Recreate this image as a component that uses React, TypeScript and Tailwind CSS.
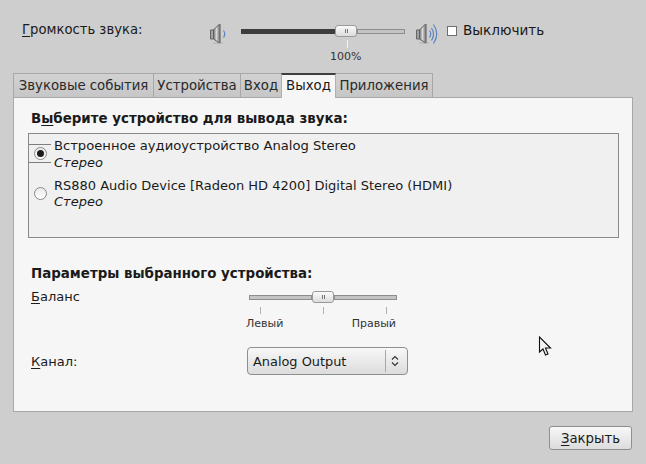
import React from 'react';

const tabs = [
  { label: 'Звуковые события', width: 'w-[141px]' },
  { label: 'Устройства', width: 'w-[88px]' },
  { label: 'Вход', width: 'w-[42px]' },
  { label: 'Выход', width: 'w-[55px]' },
  { label: 'Приложения', width: 'w-[98px]' },
];

const Speaker = ({ waves }: { waves: number }) => (
  <svg width="32" height="24" viewBox="0 0 32 24" className="block">
    <defs>
      <linearGradient id="cone" x1="0" y1="0" x2="1" y2="0">
        <stop offset="0" stopColor="#6f6f6f" />
        <stop offset="0.5" stopColor="#d8d8d8" />
        <stop offset="1" stopColor="#7a7a7a" />
      </linearGradient>
    </defs>
    <ellipse cx="9" cy="22" rx="5.5" ry="1" fill="#bcbcbc" />
    <path d="M1.5 9h3v9h-3z" fill="#a2a2a2" stroke="#666" strokeWidth="1" />
    <path d="M4.5 9l6-6v19l-6-4z" fill="url(#cone)" stroke="#5f5f5f" strokeWidth="1" />
    <path d="M10.5 3h1.5v19h-1.5z" fill="#8f8f8f" />
    <path d="M14.5 9.5q2.5 3.5 0 7" fill="none" stroke="#5a84c0" strokeWidth="1.2" />
    {waves > 1 && <path d="M16.5 7q4 6 0 12.5" fill="none" stroke="#5a84c0" strokeWidth="1.2" />}
    {waves > 1 && <path d="M18.5 3.5q6.5 9.5 0 19" fill="none" stroke="#5a84c0" strokeWidth="1.2" />}
  </svg>
);

const Thumb = () => (
  <div className="flex h-[12px] w-[22px] items-center justify-center gap-[1px] rounded-[3px] border border-[#9a9a9a] bg-gradient-to-b from-[#fbfbfb] to-[#dcdcdc]">
    <span className="h-[4px] w-[1px] bg-[#777]" />
    <span className="h-[4px] w-[1px] bg-[#777]" />
  </div>
);

const Radio = ({ checked }: { checked?: boolean }) => (
  <span className="flex h-[13px] w-[13px] items-center justify-center rounded-full border border-[#8a8a8a] bg-gradient-to-b from-[#e9e9e9] to-white">
    {checked && <span className="h-[7px] w-[7px] rounded-full bg-[#1c1c1c]" />}
  </span>
);

export default function App() {
  return (
    <div
      className="relative flex h-[464px] w-[646px] flex-col overflow-hidden bg-[#cecece] text-[13px] leading-[17px] text-[#1a1a1a]"
      style={{ fontFamily: '"DejaVu Sans", sans-serif' }}
    >
      {/* volume row */}
      <div className="flex h-[73px] shrink-0">
        <div className="ml-[22px] mt-[21px] w-[187px] whitespace-nowrap text-[13.2px]">
          <u className="underline-offset-2">Г</u>ромкость звука:
        </div>
        <div className="mt-[21px]"><Speaker waves={1} /></div>
        <div className="w-[164px] shrink-0">
          <div className="mt-[25px] flex h-[12px] items-center">
            <div className="h-[5px] w-[94px] bg-[#3d3d3d]" />
            <Thumb />
            <div className="h-[5px] flex-1 border border-[#8d8d8d] bg-[#c4c4c4]" />
          </div>
          <div className="ml-[106px] mt-[3px] h-[8px] w-[1px] bg-[#f2f2f2]" />
          <div className="ml-[89px] mt-[2px] text-[11px] leading-[14px] text-[#333]">100%</div>
        </div>
        <div className="ml-[10px] mt-[21px]"><Speaker waves={3} /></div>
        <div className="mt-[22px] flex items-center self-start">
          <span className="h-[10px] w-[10px] border border-[#6f6f6f] bg-white" />
          <span className="ml-[6px] text-[13.6px]">Выключить</span>
        </div>
      </div>

      {/* tabs */}
      <div className="ml-[13px] flex h-[24px] shrink-0 items-end text-[13.3px]">
        {tabs.map((t) =>
          t.label === 'Выход' ? (
            <div key={t.label} className={`${t.width} relative z-10 -mb-[1px] -ml-[1px] flex h-[25px] items-center justify-center border-t-2 border-x border-[#3f3f3f] border-x-[#b0b0b0] bg-[#f6f6f6] pb-[3px]`}>
              {t.label}
            </div>
          ) : (
            <div key={t.label} className={`${t.width} -ml-[1px] flex h-[24px] items-center justify-center border border-b-0 border-[#a8a8a8] bg-gradient-to-b from-[#d2d2d2] to-[#c6c6c6] text-[#2a2a2a] first:ml-0`}>
              {t.label}
            </div>
          ),
        )}
      </div>

      {/* panel */}
      <div className="mx-[13px] h-[315px] shrink-0 border border-[#a8a8a8] bg-[#f6f6f6] pl-[14px] pr-[14px]">
        <div className="ml-[3px] mt-[12px] text-[13.4px] font-bold">
          В<u className="underline-offset-2">ы</u>берите устройство для вывода звука:
        </div>
        <div className="mt-[6px] flex h-[105px] w-[591px] border border-[#8a8a8a] bg-[#f0f0f0]">
          <div className="w-[22px] shrink-0">
            <div className="mt-[10px] flex h-[19px] items-center justify-center border-y border-[#7d7d7d]"><Radio checked /></div>
            <div className="mt-[21px] flex h-[19px] items-center justify-center"><Radio /></div>
          </div>
          <div className="ml-[3px] pt-[3px]">
            <div className="text-[13.13px]">Встроенное аудиоустройство Analog Stereo</div>
            <div className="italic">Стерео</div>
            <div className="mt-[6px]">RS880 Audio Device [Radeon HD 4200] Digital Stereo (HDMI)</div>
            <div className="-mt-[1px] italic">Стерео</div>
          </div>
        </div>

        <div className="ml-[3px] mt-[27px] text-[13.4px] font-bold">Параметры выбранного устройства:</div>
        <div className="mt-[6px] flex h-[50px]">
          <div className="ml-[3px] w-[215px] shrink-0">
            <u className="underline-offset-2">Б</u>аланс
          </div>
          <div className="w-[152px] shrink-0">
            <div className="ml-[3px] mt-[3px] flex h-[12px] w-[148px] items-center">
              <div className="h-[5px] w-[63px] border border-[#8d8d8d] bg-[#c4c4c4]" />
              <Thumb />
              <div className="h-[5px] flex-1 border border-[#8d8d8d] bg-[#c4c4c4]" />
            </div>
            <div className="ml-[14px] mt-[4px] flex w-[127px] justify-between">
              <span className="h-[7px] w-[1px] bg-[#b0b0b0]" />
              <span className="h-[7px] w-[1px] bg-[#b0b0b0]" />
              <span className="h-[7px] w-[1px] bg-[#b0b0b0]" />
            </div>
            <div className="mt-[3px] flex w-[150px] justify-between text-[11px] leading-[14px] text-[#333]">
              <span>Левый</span>
              <span>Правый</span>
            </div>
          </div>
        </div>
        <div className="mt-[9px] flex h-[28px]">
          <div className="ml-[3px] mt-[6px] w-[216px] shrink-0">
            <u className="underline-offset-2">К</u>анал:
          </div>
          <div className="flex h-[28px] w-[161px] items-center rounded-[4px] border border-[#8f8f8f] bg-gradient-to-b from-[#f8f8f8] to-[#dcdcdc]">
            <span className="ml-[5px] w-[132px] shrink-0 text-[12.9px]">Analog Output</span>
            <span className="h-[22px] w-[1px] bg-[#a9a9a9]" />
            <svg width="8" height="12" viewBox="0 0 8 12" className="ml-[5px]">
              <path d="M1 4.5L4 1.5L7 4.5M1 7.5L4 10.5L7 7.5" fill="none" stroke="#333" strokeWidth="1.1" />
            </svg>
          </div>
        </div>
      </div>

      {/* footer */}
      <div className="mr-[14px] mt-[14px] flex justify-end">
        <button className="flex h-[24px] w-[83px] items-center justify-center rounded-[3px] border border-[#8f8f8f] bg-gradient-to-b from-[#f8f8f8] to-[#dcdcdc] text-[13.3px]">
          <span><u className="underline-offset-2">З</u>акрыть</span>
        </button>
      </div>

      {/* mouse pointer on top of the screenshot */}
      <svg width="16" height="22" viewBox="0 0 16 22" className="absolute left-[538px] top-[336px]">
        <path d="M1.5 1v15l3.5-3 2.5 6 2.5-1-2.5-6h5z" fill="#f4f4f4" stroke="#111" strokeWidth="1.1" />
      </svg>
    </div>
  );
}
